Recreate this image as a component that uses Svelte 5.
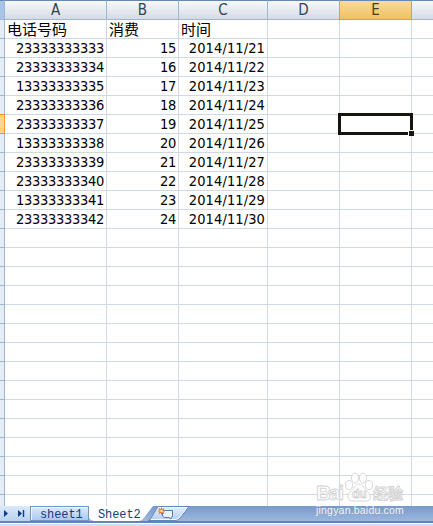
<script lang="ts">
  const columns = ['A', 'B', 'C', 'D', 'E', ''];
  const selected = { row: 5, col: 4 };

  const records = [
    ['23333333333', '15', '2014/11/21'],
    ['23333333334', '16', '2014/11/22'],
    ['13333333335', '17', '2014/11/23'],
    ['23333333336', '18', '2014/11/24'],
    ['23333333337', '19', '2014/11/25'],
    ['13333333338', '20', '2014/11/26'],
    ['23333333339', '21', '2014/11/27'],
    ['23333333340', '22', '2014/11/28'],
    ['13333333341', '23', '2014/11/29'],
    ['23333333342', '24', '2014/11/30'],
  ];
  const rows = [['电话号码', '消费', '时间'], ...records];
  while (rows.length < 26) rows.push([]);
</script>

<div class="window">
  <div class="sheet">
    <div class="line head">
      <span class="corner"></span>
      {#each columns as name, c}
        <span class="col" class:active={c === selected.col}>{name}</span>
      {/each}
    </div>
    {#each rows as row, r}
      <div class="line">
        <span class="row-head" class:active={r === selected.row}></span>
        {#each columns as _, c}
          <span class="cell" class:date={c === 2} class:title={r === 0}>
            {row[c] ?? ''}
            {#if r === selected.row && c === selected.col}
              <i class="cursor"></i><i class="handle"></i>
            {/if}
          </span>
        {/each}
      </div>
    {/each}
  </div>

  <div class="tabs">
    <svg class="nav" width="30" height="15" viewBox="0 0 30 15">
      <path d="M4 4v7l4-3.5zM18 4v7l4-3.5z" fill="#113c8c" />
      <path d="M23.5 4v7" stroke="#113c8c" stroke-width="1.4" />
    </svg>
    <div class="tab">sheet1</div>
    <div class="tab current">
      <svg width="64" height="16" viewBox="0 0 64 16">
        <path d="M0 0H64L54 13Q52 15 49 15H5Q2 15 0 12z" fill="#fff" />
      </svg>
      <span>Sheet2</span>
    </div>
    <svg class="new" width="46" height="15" viewBox="0 0 46 15">
      <defs>
        <linearGradient id="tab" x2="0" y2="1">
          <stop offset="0" stop-color="#e5effc" />
          <stop offset="1" stop-color="#b3cff2" />
        </linearGradient>
      </defs>
      <path d="M11 .5H42L33 12Q31 14.5 28 14.5H1Q3 14 4 12z" fill="url(#tab)" stroke="#6187ba" />
      <path d="M11.5 1.5H40L32 12Q30 13.5 28 13.5H4" fill="none" stroke="#f4f9ff" />
      <path d="M15.5 4.500H25.5V10.5L24 11.5V13L22 11.5H17.5L15.5 10z" fill="#eef3fb" stroke="#5c79ab" />
      <path d="M14.500 1.500v7M11 5h7M12 2.500l5 5M17 2.500l-5 5" stroke="#dc7b17" stroke-width="1.100" />
      <circle cx="14.500" cy="5" r="1.300" fill="#ffe69c" />
    </svg>
  </div>
  <div class="status"></div>

  <div class="watermark">
    <svg width="90" height="32" viewBox="0 0 90 32">
      <g class="outline">
        <text x="0" y="28" font-size="21" textLength="28">Bai</text>
        <ellipse cx="33" cy="13" rx="3.5" ry="4.5" />
        <ellipse cx="39" cy="6" rx="3.5" ry="5" />
        <ellipse cx="47" cy="6" rx="3.5" ry="5" />
        <ellipse cx="53" cy="13" rx="3.5" ry="4.5" />
        <path d="M43 12c-4 0-5 5-9 8-4 4-2 9 3 9h13c5 0 6-5 2-9-4-3-5-8-9-8z" />
        <text x="36" y="26" font-size="12">du</text>
        <text x="57" y="27" font-size="15" textLength="30">经验</text>
      </g>
    </svg>
    <div class="site">jingyan.baidu.com</div>
  </div>
</div>

<style>
  .window {
    position: relative;
    display: flex;
    flex-direction: column;
    width: 433px;
    height: 526px;
    overflow: hidden;
    background: #fff;
    font-family: "DejaVu Sans Condensed", "DejaVu Sans", "Noto Sans CJK SC", sans-serif;
    color: #000;
  }

  .sheet {
    height: 506px;
    flex: none;
    overflow: hidden;
  }

  .line {
    display: grid;
    grid-template-columns: 5px 102px 72px 89px 72px 72px 22px;
    grid-template-rows: 100%;
    height: 19px;
  }
  .line > span {
    box-sizing: border-box;
    min-width: 0;
  }

  .head {
    height: 20px;
  }
  .col, .corner {
    border-top: 1px solid #6589b5;
    border-bottom: 1px solid #9eb6ce;
    border-right: 1px solid #9eb6ce;
    background: linear-gradient(#f7f9fc, #d4dbe7);
    font-size: 15px;
    line-height: 19px;
    text-align: center;
    color: #334451;
  }
  .corner { background: #a9c4e9; }
  .col.active {
    background: linear-gradient(#f9d9a0, #f1c15f);
    border-color: #6589b5 #f29536 #f29536;
    box-shadow: -1px 0 #f29536;
    color: #40401f;
  }

  .row-head {
    background: #e4ecf7;
    border-right: 1px solid #9eb6ce;
    border-bottom: 1px solid #9eb6ce;
  }
  .row-head.active {
    background: #ffd58d;
    border-color: #f29536;
    box-shadow: 0 -1px #f29536;
  }

  .cell {
    position: relative;
    border-right: 1px solid #d0d7e5;
    border-bottom: 1px solid #d0d7e5;
    padding-right: 2px;
    font-size: 14.5px;
    line-height: 18px;
    letter-spacing: -0.3px;
    text-align: right;
    white-space: nowrap;
  }
  .cell.date { letter-spacing: 0.1px; }
  .cell.title {
    padding-left: 2px;
    text-align: left;
    font-family: "Noto Sans CJK SC", sans-serif;
    font-size: 15px;
    letter-spacing: 0;
  }

  .cursor {
    position: absolute;
    z-index: 1;
    left: -2px;
    top: -2px;
    width: 69px;
    height: 16px;
    border: 3px solid #17150f;
  }
  .handle {
    position: absolute;
    z-index: 2;
    right: -3px;
    bottom: -3px;
    width: 5px;
    height: 5px;
    background: #17150f;
    border: solid #fff;
    border-width: 1px 0 0 1px;
  }

  .tabs {
    display: flex;
    height: 15px;
    border-bottom: 2px solid #5f86b9;
    background: linear-gradient(#7899c9, #9db8df);
    font-family: "Liberation Mono", monospace;
    font-size: 12px;
    line-height: 18px;
    letter-spacing: -0.1px;
    color: #153c7b;
  }
  .nav {
    background: linear-gradient(#dbe9fa, #b9d2f1);
  }
  .tab {
    box-sizing: border-box;
    width: 59px;
    padding-left: 9px;
    border: 1px solid #7396c6;
    box-shadow: inset 1px 1px #f0f6ff;
    background: linear-gradient(#dceafb, #acc9ef);
    line-height: 16px;
  }
  .tab.current {
    position: relative;
    width: 58px;
    border: 0;
    box-shadow: none;
    background: none;
    line-height: 18px;
  }
  .current svg {
    position: absolute;
    left: 0;
    top: 0;
  }
  .current span { position: relative; }
  .new { position: relative; }

  .status {
    flex: 1;
    border-top: 1px solid #fff;
    background: #cbdff5;
  }

  .watermark {
    position: absolute;
    left: 316px;
    top: 472px;
    width: 90px;
  }
  .watermark svg { display: block; }
  .outline {
    fill: #fff;
    fill-opacity: 0.8;
    stroke: #d3d3d3;
    stroke-width: 0.9;
    font-family: "Liberation Sans", "Noto Sans CJK SC", sans-serif;
    font-weight: bold;
  }
  .site {
    font: 10.5px/12px "Liberation Sans", sans-serif;
    letter-spacing: 0.2px;
    color: #f5f7fa;
    text-shadow: 0 0 1px #8c98a8;
  }
</style>
